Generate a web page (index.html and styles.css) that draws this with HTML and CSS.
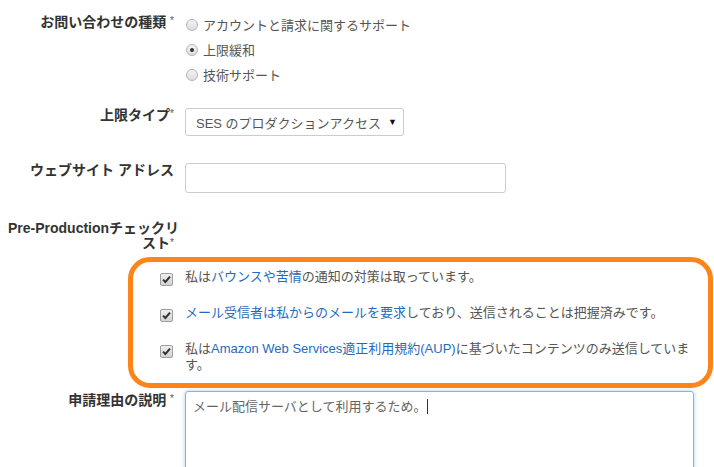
FILE: index.html
```html
<!DOCTYPE html>
<html lang="ja">
<head>
<meta charset="utf-8">
<link rel="stylesheet" href="styles.css">
</head>
<body>
<form class="form">
  <div class="row row-type">
    <div class="label">お問い合わせの種類 <span class="req">*</span></div>
    <div class="radios">
      <div class="radio-opt"><span class="radio"></span>アカウントと請求に関するサポート</div>
      <div class="radio-opt"><span class="radio checked"></span>上限緩和</div>
      <div class="radio-opt"><span class="radio"></span>技術サポート</div>
    </div>
  </div>

  <div class="row row-limit">
    <div class="label">上限タイプ<span class="req">*</span></div>
    <div class="select"><span>SES のプロダクションアクセス</span><span class="arrow">▼</span></div>
  </div>

  <div class="row row-site">
    <div class="label">ウェブサイト アドレス</div>
    <div class="input"></div>
  </div>

  <div class="row row-check">
    <div class="label label-wrap">Pre-Productionチェックリ<br>スト<span class="req">*</span></div>
  </div>

  <div class="checklist">
    <div class="check-item"><span class="cb"><svg viewBox="0 0 13 13" width="13" height="13"><path d="M3 6.6 L5.4 9 L10 3.6" fill="none" stroke="#333" stroke-width="2"/></svg></span><span class="check-text">私は<span class="link">バウンスや苦情</span>の通知の対策は取っています。</span></div>
    <div class="check-item"><span class="cb"><svg viewBox="0 0 13 13" width="13" height="13"><path d="M3 6.6 L5.4 9 L10 3.6" fill="none" stroke="#333" stroke-width="2"/></svg></span><span class="check-text"><span class="link">メール受信者は私からのメールを要求</span>しており、送信されることは把握済みです。</span></div>
    <div class="check-item"><span class="cb"><svg viewBox="0 0 13 13" width="13" height="13"><path d="M3 6.6 L5.4 9 L10 3.6" fill="none" stroke="#333" stroke-width="2"/></svg></span><span class="check-text">私は<span class="link">Amazon Web Services適正利用規約(AUP)</span>に基づいたコンテンツのみ送信しています。</span></div>
  </div>

  <div class="row row-reason">
    <div class="label">申請理由の説明 <span class="req">*</span></div>
    <div class="textarea">メール配信サーバとして利用するため。<span class="caret"></span></div>
  </div>
</form>
</body>
</html>
```

FILE: styles.css
```css
html, body {
  margin: 0;
  padding: 0;
  background: #fff;
  overflow: hidden;
}
body {
  font-family: "Liberation Sans", "Noto Sans CJK JP", sans-serif;
  color: #333;
  font-size: 13px;
}
.form {
  padding: 12px 0 0 8px;
}
.row {
  display: grid;
  grid-template-columns: 166px 1fr;
  column-gap: 11px;
  align-items: start;
}
.label {
  font-weight: bold;
  font-size: 14px;
  line-height: 16px;
  text-align: right;
  color: #333;
  white-space: nowrap;
}
.req {
  font-weight: normal;
  font-size: 10px;
  color: #555;
  vertical-align: top;
  position: relative;
  top: -1px;
}
.row-type .label { padding-top: 2px; }
.radios { color: #555; }
.radio-opt {
  display: flex;
  align-items: center;
  height: 25px;
  margin-left: 1px;
}
.radio {
  width: 10px;
  height: 10px;
  border: 1px solid #b5b5b5;
  border-radius: 50%;
  background: linear-gradient(#f4f4f4, #dcdcdc);
  margin-right: 5px;
  display: flex;
  align-items: center;
  justify-content: center;
}
.radio.checked::after {
  content: "";
  width: 4px;
  height: 4px;
  border-radius: 50%;
  background: #333;
}

.row-limit { margin-top: 20px; }
.select {
  margin-top: 1px;
  height: 26px;
  border: 1px solid #ccc;
  border-radius: 3px;
  display: flex;
  align-items: center;
  justify-content: space-between;
  padding: 0 6px 0 10px;
  box-sizing: content-box;
  width: 201px;
  color: #555;
}
.select .arrow {
  font-size: 9px;
  color: #111;
}

.row-site { margin-top: 26px; }
.input {
  margin-top: 1px;
  width: 319px;
  height: 28px;
  border: 1px solid #ccc;
  border-radius: 3px;
}

.row-check { margin-top: 27px; }
.label-wrap {
  line-height: 15px;
  padding-top: 1px;
}

.checklist {
  margin: 6px 1px 0 120px;
  border: 5px solid #fc8419;
  border-radius: 22px;
  padding: 7px 6px 10px 27px;
}
.check-item {
  display: flex;
  align-items: flex-start;
  line-height: 16px;
  color: #555;
}
.check-item + .check-item { margin-top: 19px; }
.cb {
  flex: none;
  width: 11px;
  height: 11px;
  border: 1px solid #9e9e9e;
  border-radius: 2px;
  background: linear-gradient(#eee, #d4d4d4);
  margin-top: 4px;
  margin-right: 12px;
  position: relative;
}
.cb svg {
  position: absolute;
  left: -1px;
  top: -1px;
}
.link { color: #1f6bbd; }

.row-reason { margin-top: 3px; }
.row-reason .label { padding-top: 1px; }
.textarea {
  width: 493px;
  height: 100px;
  border: 1px solid #7fb8e8;
  border-radius: 3px;
  box-shadow: 0 0 4px rgba(102, 175, 233, 0.6);
  padding: 7px 7px;
  color: #666;
  line-height: 15px;
}
.caret {
  display: inline-block;
  width: 1px;
  height: 15px;
  background: #333;
  vertical-align: top;
  margin-left: 1px;
}
```
